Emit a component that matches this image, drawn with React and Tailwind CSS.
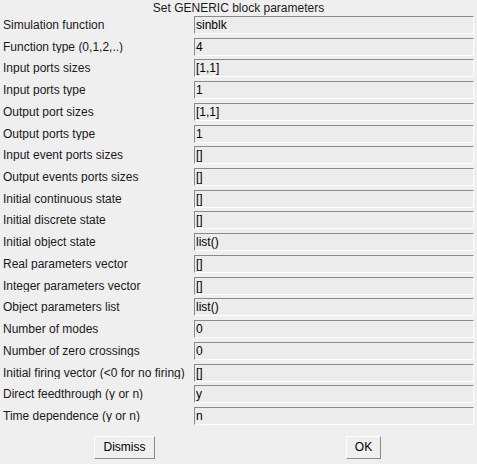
import React from "react";

const rows = [
  ["Simulation function", "sinblk"],
  ["Function type (0,1,2,..)", "4"],
  ["Input ports sizes", "[1,1]"],
  ["Input ports type", "1"],
  ["Output port sizes", "[1,1]"],
  ["Output ports type", "1"],
  ["Input event ports sizes", "[]"],
  ["Output events ports sizes", "[]"],
  ["Initial continuous state", "[]"],
  ["Initial discrete state", "[]"],
  ["Initial object state", "list()"],
  ["Real parameters vector", "[]"],
  ["Integer parameters vector", "[]"],
  ["Object parameters list", "list()"],
  ["Number of modes", "0"],
  ["Number of zero crossings", "0"],
  ["Initial firing vector (<0 for no firing)", "[]"],
  ["Direct feedthrough (y or n)", "y"],
  ["Time dependence (y or n)", "n"],
];

export default function App() {
  return (
    <div
      className="w-[477px] h-[464px] bg-[#efefef] text-[#1a1a1a] overflow-hidden flex flex-col"
      style={{ fontFamily: '"Liberation Sans", Arial, sans-serif' }}
    >
      <div className="h-[16px] flex items-center justify-center text-[12px] leading-none pl-[0px]">
        Set GENERIC block parameters
      </div>
      <div className="flex flex-col gap-[3.72px]">
        {rows.map(([label, value]) => (
          <div key={label} className="flex items-center h-[18px]">
            <div className="w-[194px] pl-[3px] text-[12px] leading-none whitespace-nowrap overflow-hidden">
              {label}
            </div>
            <div className="w-[280px] h-[18px] bg-[#ececec] border border-t-[#8a8a8a] border-l-[#8a8a8a] border-b-white border-r-white flex items-center pl-[1px] text-[12px] leading-none text-black">
              {value}
            </div>
          </div>
        ))}
      </div>
      <div className="relative flex-1">
        <button className="absolute left-[94px] top-[11px] w-[61px] h-[23px] bg-[#efefef] border border-t-white border-l-white border-b-[#8a8a8a] border-r-[#8a8a8a] text-[12px] leading-none text-black">
          Dismiss
        </button>
        <button className="absolute left-[346px] top-[11px] w-[35px] h-[23px] bg-[#efefef] border border-t-white border-l-white border-b-[#8a8a8a] border-r-[#8a8a8a] text-[12px] leading-none text-black">
          OK
        </button>
      </div>
    </div>
  );
}
